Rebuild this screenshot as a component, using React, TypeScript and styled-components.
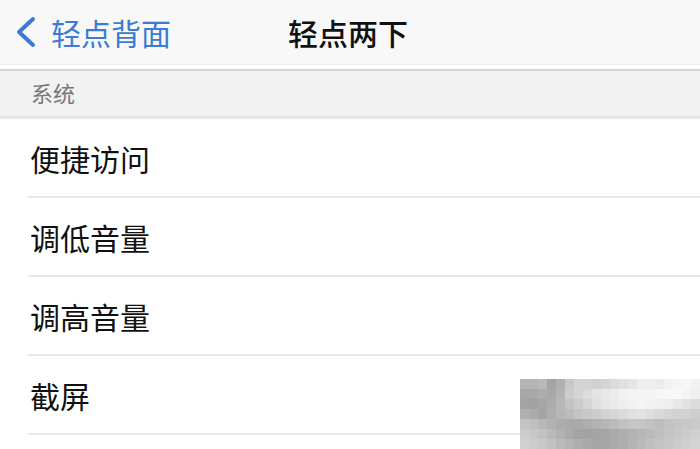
import { createGlobalStyle, styled } from 'styled-components';

const GlobalStyle = createGlobalStyle`
  html, body {
    margin: 0;
    padding: 0;
    background: #ffffff;
  }
  body {
    font-family: 'Noto Sans CJK SC', 'Noto Sans', sans-serif;
  }
`;

const Screen = styled.div`
  position: relative;
  width: 700px;
  height: 449px;
  overflow: hidden;
  background: #ffffff;
`;

const NavBar = styled.header`
  display: grid;
  grid-template-columns: 1fr auto 1fr;
  align-items: center;
  height: 64px;
  padding: 0 18px 0 14px;
  background: #f8f8f8;
  border-bottom: 1px solid #efefef;
`;

const BackButton = styled.div`
  display: flex;
  align-items: center;
  gap: 15px;
  color: #3a7bd5;
  font-size: 30px;
  line-height: 1;
`;

const Title = styled.h1`
  margin: 0;
  font-size: 30px;
  font-weight: 500;
  color: #111111;
  line-height: 1;
`;

const Gap = styled.div`
  height: 4px;
  background: #ffffff;
`;

const SectionHeader = styled.div`
  display: flex;
  align-items: center;
  height: 50px;
  padding: 0 0 4px 31px;
  box-sizing: border-box;
  background: #f2f2f2;
  border-top: 2px solid #d6d6d6;
  border-bottom: 3px solid #e6e6e6;
  font-size: 22px;
  color: #787878;
`;

const List = styled.ul`
  margin: 0;
  padding: 0 0 0 28px;
  list-style: none;
`;

const Row = styled.li`
  display: flex;
  align-items: center;
  height: 77px;
  padding-left: 2px;
  border-bottom: 2px solid #e8e8e8;
  font-size: 30px;
  color: #111111;
`;

const Mosaic = styled.svg`
  position: absolute;
  left: 520px;
  top: 378px;
`;

const shades = [
  'b4b4b8a4b0c8d4d4d0d4dce0e6eeeeecf2f4f6f2e4',
  'a8a8aca8b4ccd4dce4e8ecf2f4f4f4f6f8f8f4f0e0',
  'a4a2a6acb8c4ccd6e0e6eaeef2f4f2f0eee8e2dcd2',
  'b0aca4aeb6bcc4c8ccd2d6dae0e2ded8d4d2d2cec8',
  'c4c0b8b2acaaaaaeb2b6bcc2c6c6c2bec2c6c8cac6',
  'ccc8c2bab2aaa4a2a4a6aaaeb2b6bac0c4c8ccd0cc',
  'd0ccc8c2bab4aeaaa6a6aaaeb4bac0c4c8ccd0d4d0',
];

function MosaicBlur() {
  return (
    <Mosaic width={180} height={71} viewBox="0 0 180 71">
      {shades.map((line, r) =>
        Array.from({ length: line.length / 2 }).map((_, c) => {
          const hex = line.slice(c * 2, c * 2 + 2);
          return (
            <rect
              key={`${r}-${c}`}
              x={c * 9}
              y={r * 10 + 1}
              width={9}
              height={10}
              fill={`#${hex}${hex}${hex}`}
            />
          );
        })
      )}
    </Mosaic>
  );
}

const items = ['便捷访问', '调低音量', '调高音量', '截屏'];

export default function App() {
  return (
    <Screen>
      <GlobalStyle />
      <NavBar>
        <BackButton>
          <svg width="22" height="32" viewBox="0 0 22 32">
            <path d="M19 3 L5 16 L19 29" fill="none" stroke="#3a7bd5" strokeWidth="4" strokeLinecap="round" strokeLinejoin="round" />
          </svg>
          <span>轻点背面</span>
        </BackButton>
        <Title>轻点两下</Title>
        <div />
      </NavBar>
      <Gap />
      <SectionHeader>系统</SectionHeader>
      <List>
        {items.map((item) => (
          <Row key={item}>{item}</Row>
        ))}
      </List>
      <MosaicBlur />
    </Screen>
  );
}
